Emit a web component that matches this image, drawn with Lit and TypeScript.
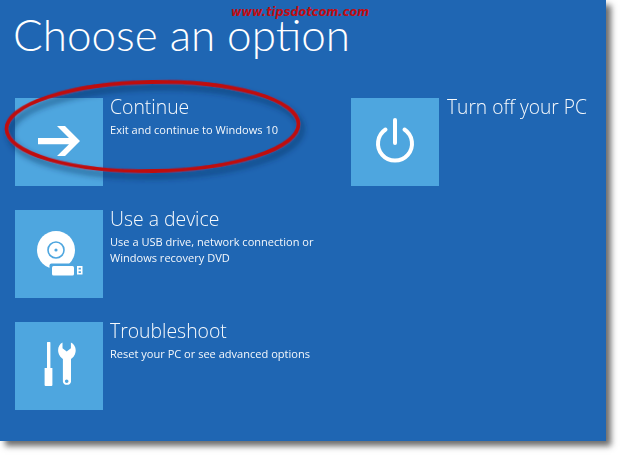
import { LitElement, html, css, svg } from "lit";
import { customElement } from "lit/decorators.js";

const arrow = svg`<path fill="#fff" d="M23 40H54L42 28H50L65 43L50 58H42L54 46.300H23Z"/>`;
const power = svg`<path d="M34.500 31.500A17 17 0 1 0 53.500 31.500" fill="none" stroke="#fff" stroke-width="4" stroke-linecap="round"/><path d="M44 22v23" stroke="#fff" stroke-width="4" stroke-linecap="round"/>`;
const device = svg`<circle cx="41" cy="40" r="19" fill="#fff"/>
<circle cx="41" cy="40" r="8" fill="none" stroke="#4ea6df" stroke-width="1.600"/>
<circle cx="41" cy="40" r="1.600" fill="#4ea6df"/>
<rect x="34.500" y="53.500" width="30" height="14" rx="2" fill="#4ea6df"/>
<rect x="37" y="56" width="22" height="9.500" rx="1.500" fill="#fff"/>
<path fill="#fff" fill-rule="evenodd" d="M62 56h5.500v8.500H62Zm1.600 1.700v1.700h2.300v-1.700Zm0 3.500v1.700h2.300v-1.700Z"/>`;
const tools = svg`<path fill="#fff" d="M32 20.500a.5.5 0 0 1 .5-.5h2.400a.5.5 0 0 1 .5.5V46h2v17a1 1 0 0 1-1 1h-5.800a1 1 0 0 1-1-1V46H32Z"/>
<path fill="#fff" fill-rule="evenodd" d="M47.500 20.500v5.800l4.200 3.200 4.200-3.200v-5.800c3 1.400 4.800 4.400 4.800 7.800 0 4-2.200 7.300-4.700 8.700V60a4.300 4.300 0 0 1-8.100 0V37c-2.200-1.400-4.800-4.700-4.800-8.700 0-3.400 1.600-6.400 4.400-7.800ZM51.700 57.500a1.800 1.800 0 1 0 0 3.600 1.800 1.800 0 0 0 0-3.600Z"/>`;

@customElement("app-root")
export class AppRoot extends LitElement {
  static styles = css`
    :host { display: block; position: relative; width: 621px; height: 456px; background: #fff; overflow: hidden;
      font-family: "Open Sans", "Liberation Sans", sans-serif; color: #fff; }
    .panel { width: 606px; height: 441px; box-sizing: border-box; background: #1f66b3; padding: 0 0 0 15px;
      box-shadow: 5px 5px 6px rgba(60,60,60,.75); }
    h1 { margin: 0 0 0 -2px; height: 98px; font-family: Lato, "Open Sans", sans-serif; font-weight: 300; font-size: 44px; line-height: 68px; }
    .grid { display: grid; grid-template-columns: 336px 1fr; }
    .col { display: flex; flex-direction: column; gap: 24px; }
    .row { display: flex; gap: 7px; height: 88px; }
    .wide { gap: 8px; }
    .tile { width: 88px; height: 88px; background: #4ea6df; flex: none; }
    .tile svg { display: block; }
    .name { font-weight: 300; font-size: 19.400px; line-height: 20px; margin-top: -1px; opacity: .97; }
    .wide .name { font-size: 19.200px; }
    .desc { font-size: 11.050px; line-height: 16px; margin-top: 5px; font-weight: 400; opacity: .95; }
    .mark { position: absolute; left: 231px; top: 4px; color: #c00d12; font: italic bold 11.400px/16px "DejaVu Sans", sans-serif; white-space: nowrap; }
    .oval { position: absolute; left: 0; top: 0; pointer-events: none; }
  `;
  item(icon: unknown, name: string, lines: string[], wide = false) {
    return html`<div class="row ${wide ? "wide" : ""}">
      <div class="tile"><svg width="88" height="88" viewBox="0 0 88 88">${icon}</svg></div>
      <div><div class="name">${name}</div>
        ${lines.length ? html`<div class="desc">${lines.map((l, i) => html`${i ? html`<br />` : ""}${l}`)}</div>` : ""}
      </div>
    </div>`;
  }
  render() {
    return html`<div class="panel">
        <h1>Choose an option</h1>
        <div class="grid">
          <div class="col">
            ${this.item(arrow, "Continue", ["Exit and continue to Windows 10"])}
            ${this.item(device, "Use a device", ["Use a USB drive, network connection or", "Windows recovery DVD"])}
            ${this.item(tools, "Troubleshoot", ["Reset your PC or see advanced options"])}
          </div>
          <div class="col">${this.item(power, "Turn off your PC", [], true)}</div>
        </div>
      </div>
      <div class="mark">www.tipsdotcom.com</div>
      <svg class="oval" width="621" height="456" viewBox="0 0 621 456">
        <defs><filter id="s" x="-10%" y="-20%" width="120%" height="150%"><feDropShadow dx="3" dy="5" stdDeviation="3" flood-color="#0d2c55" flood-opacity=".7"/></filter></defs>
        <ellipse cx="152.500" cy="126.500" rx="146" ry="44.500" fill="none" stroke="#bf0a10" stroke-width="3.800" transform="rotate(-1 152.500 126.500)" filter="url(#s)"/>
      </svg>`;
  }
}
